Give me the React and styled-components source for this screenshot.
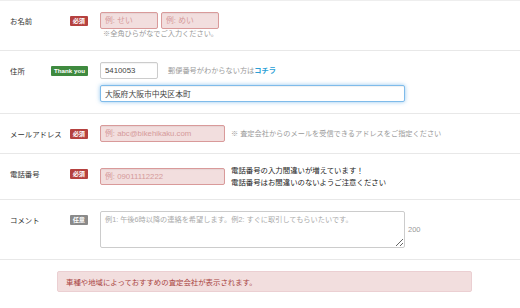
import React from "react";
import styled, { createGlobalStyle } from "styled-components";

const GlobalStyle = createGlobalStyle`
  html, body {
    margin: 0;
    padding: 0;
    background: #fff;
  }
  body {
    font-family: "Liberation Sans", "Noto Sans CJK JP", sans-serif;
    color: #333;
  }
`;

const Form = styled.div`
  width: 520px;
  border-top: 1px solid #eee;
`;

const Row = styled.div`
  display: grid;
  grid-template-columns: 78px 1fr;
  column-gap: 12px;
  padding: 11px 0 11px 10px;
  border-bottom: 1px solid #e8e8e8;
`;

const Head = styled.div`
  height: 17px;
  display: flex;
  align-items: center;
  justify-content: space-between;
`;

const Label = styled.span`
  font-size: 7.4px;
  color: #333;
  white-space: nowrap;
`;

const badgeColors = {
  required: "#b5413f",
  thanks: "#3f8a3f",
  optional: "#8a8a8a",
};

const Badge = styled.span`
  display: inline-flex;
  align-items: center;
  justify-content: center;
  box-sizing: border-box;
  height: 10px;
  padding: 0 3px;
  min-width: 18px;
  border-radius: 1px;
  background: ${(p) => badgeColors[p.$kind]};
  color: #fff;
  font-size: 6.2px;
  font-weight: bold;
  white-space: nowrap;
`;

const Field = styled.div`
  display: flex;
  flex-direction: column;
  gap: ${(p) => p.$gap || 0}px;
`;

const Line = styled.div`
  display: flex;
  align-items: center;
  gap: ${(p) => p.$gap || 3}px;
`;

const Input = styled.input`
  box-sizing: border-box;
  width: ${(p) => p.$w}px;
  height: 17px;
  padding: 0 4px;
  font-family: "Liberation Sans", "Noto Sans CJK JP", sans-serif;
  font-size: 7.8px;
  color: #444;
  border-radius: 2px;
  outline: none;
  background: ${(p) => (p.$error ? "#f2dede" : "#fff")};
  border: 1px solid
    ${(p) => (p.$error ? "#d99a9a" : p.$focus ? "#7fbbea" : "#ccc")};
  box-shadow: ${(p) =>
    p.$focus
      ? "inset 0 1px 1px rgba(0,0,0,.06), 0 0 4px rgba(102,175,233,.7)"
      : "inset 0 1px 1px rgba(0,0,0,.05)"};
  &::placeholder {
    color: ${(p) => (p.$error ? "#d59a9a" : "#aaa")};
  }
`;

const TextArea = styled.textarea`
  box-sizing: border-box;
  width: 305px;
  height: 37px;
  padding: 3px 4px;
  font-family: "Liberation Sans", "Noto Sans CJK JP", sans-serif;
  font-size: 7.2px;
  line-height: 10px;
  color: #444;
  border: 1px solid #ccc;
  border-radius: 2px;
  outline: none;
  resize: vertical;
  &::placeholder {
    color: #aaa;
  }
`;

const Note = styled.span`
  font-size: ${(p) => p.$size || 7.2}px;
  line-height: ${(p) => p.$lh || 10}px;
  color: ${(p) => (p.$dark ? "#222" : "#9a9a9a")};
  padding-left: ${(p) => p.$indent || 0}px;
  white-space: nowrap;
`;

const Link = styled.a`
  color: #2a9fd6;
  font-weight: bold;
  text-decoration: none;
`;

const Counter = styled.span`
  font-size: 7.5px;
  color: #999;
  align-self: center;
`;

const Alert = styled.div`
  margin: 11px 0 0 57px;
  width: 415px;
  box-sizing: border-box;
  height: 21px;
  padding: 0 8px;
  display: flex;
  align-items: center;
  background: #f2dede;
  border: 1px solid #ebcfd2;
  border-radius: 2px;
  color: #a94442;
  font-size: 7.4px;
`;

const FormRow = ({ label, kind, badge, children }) => (
  <Row>
    <Head>
      <Label>{label}</Label>
      <Badge $kind={kind}>{badge}</Badge>
    </Head>
    {children}
  </Row>
);

export default function App() {
  return (
    <>
      <GlobalStyle />
      <Form>
        <FormRow label="お名前" kind="required" badge="必須">
          <Field>
            <Line>
              <Input $w={58} $error placeholder="例: せい" />
              <Input $w={58} $error placeholder="例: めい" />
            </Line>
            <Note $indent={3}>※全角ひらがなでご入力ください。</Note>
          </Field>
        </FormRow>

        <FormRow label="住所" kind="thanks" badge="Thank you">
          <Field $gap={6}>
            <Line $gap={10}>
              <Input $w={58} defaultValue="5410053" />
              <Note>
                郵便番号がわからない方は<Link href="#">コチラ</Link>
              </Note>
            </Line>
            <Input $w={305} $focus defaultValue="大阪府大阪市中央区本町" />
          </Field>
        </FormRow>

        <FormRow label="メールアドレス" kind="required" badge="必須">
          <Line $gap={6}>
            <Input $w={125} $error placeholder="例: abc@bikehikaku.com" />
            <Note>※ 査定会社からのメールを受信できるアドレスをご指定ください</Note>
          </Line>
        </FormRow>

        <FormRow label="電話番号" kind="required" badge="必須">
          <Line $gap={6}>
            <Input $w={125} $error placeholder="例: 09011112222" />
            <Field>
              <Note $dark $size={7.4} $lh={11.5}>
                電話番号の入力間違いが増えています！
              </Note>
              <Note $dark $size={7.4} $lh={11.5}>
                電話番号はお間違いのないようご注意ください
              </Note>
            </Field>
          </Line>
        </FormRow>

        <FormRow label="コメント" kind="optional" badge="任意">
          <Line $gap={3}>
            <TextArea placeholder="例1: 午後6時以降の連絡を希望します。例2: すぐに取引してもらいたいです。" />
            <Counter>200</Counter>
          </Line>
        </FormRow>
      </Form>
      <Alert>車種や地域によっておすすめの査定会社が表示されます。</Alert>
    </>
  );
}
